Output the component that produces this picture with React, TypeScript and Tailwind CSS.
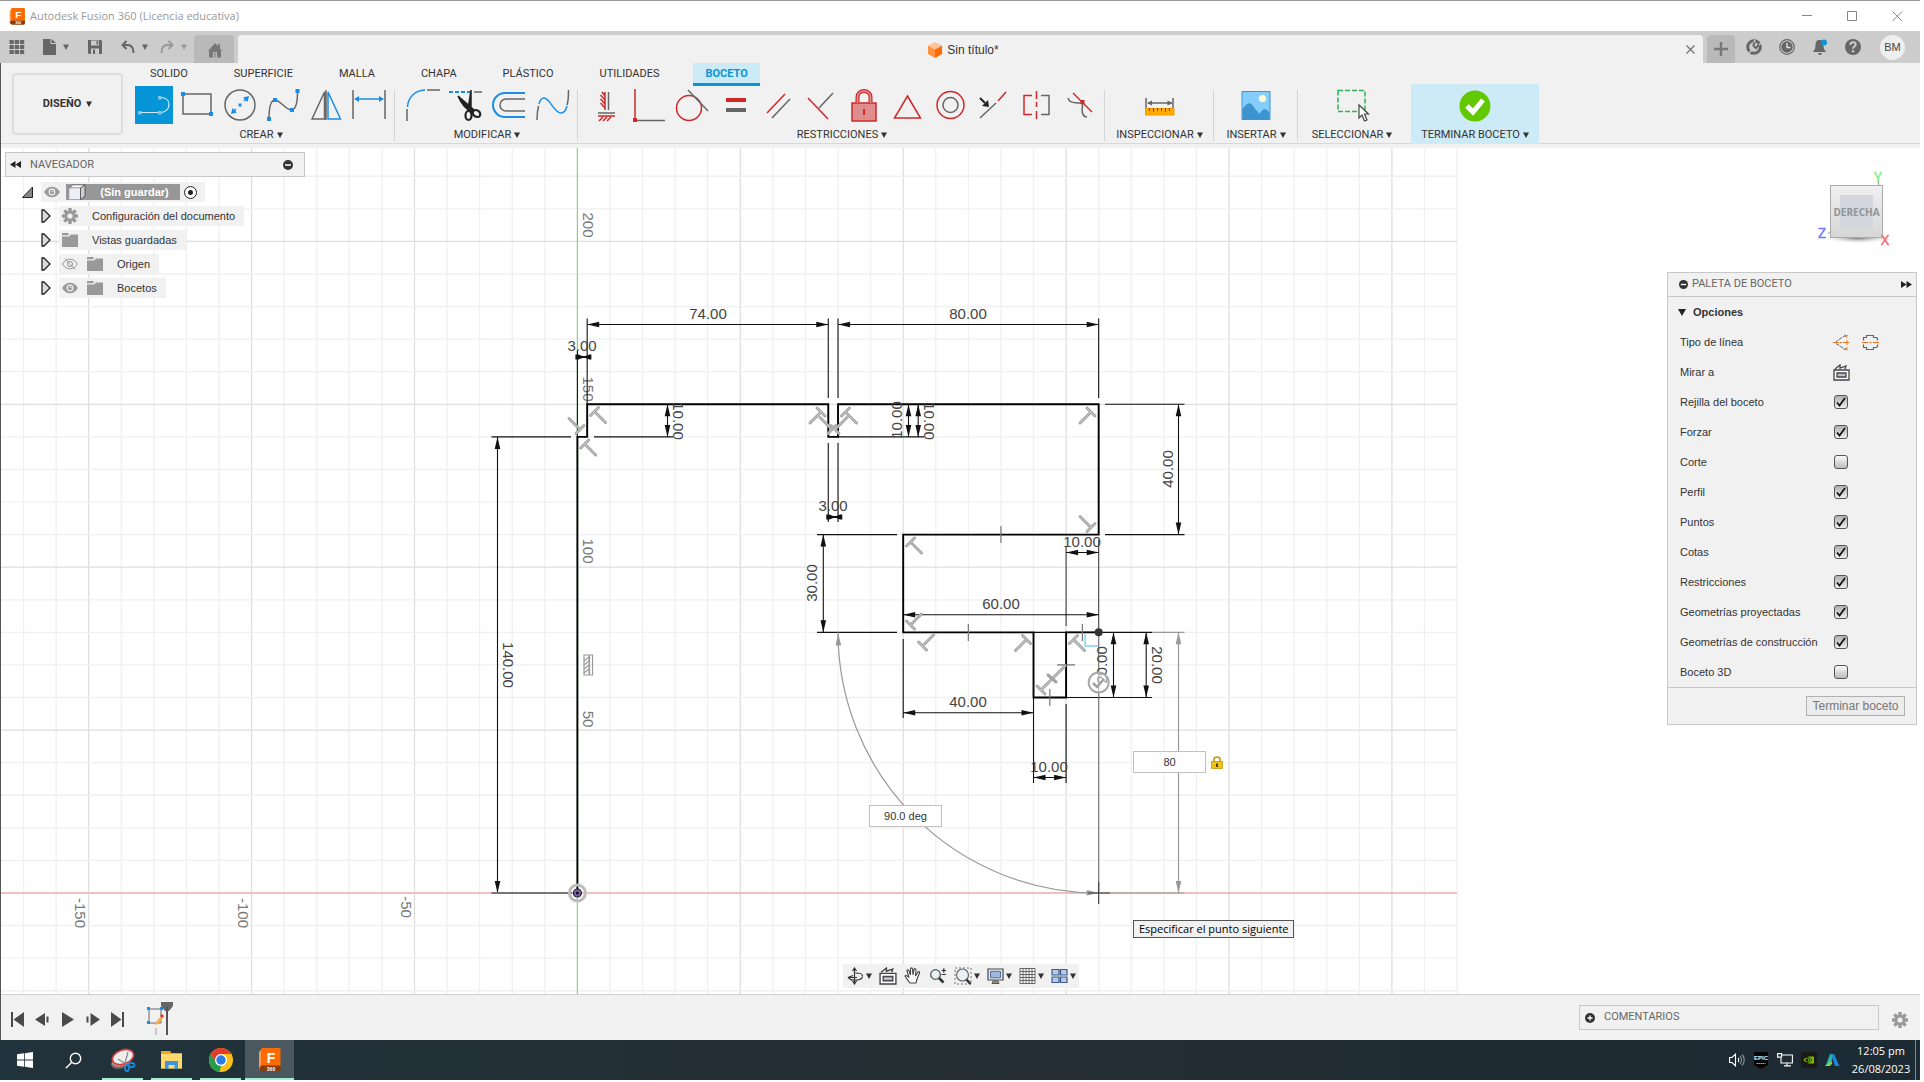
import React from "react";

const G = "#666666";
const B = "#1a8ce8";
const R = "#cf2828";

function Caret({ className = "text-[#333333]" }: { className?: string }) {
  return (
    <svg width="6" height="6" viewBox="0 0 6 6" className={className} fill="currentColor" aria-hidden="true">
      <path d="M0 .5h6L3 6z" />
    </svg>
  );
}

/* ---------- title bar ---------- */

function FusionLogo({ size }: { size: number }) {
  return (
    <svg width={size} height={size} viewBox="0 0 24 24" className="font-['Liberation_Sans',Arial,sans-serif]" aria-hidden="true">
      <path d="M1 4 4 1v18l-3 3z" fill="#ff9a4d" />
      <path d="M3 1.500A1.500 1.500 0 0 1 4.500 0H21a1.500 1.500 0 0 1 1.500 1.500V18H3z" fill="#ff6b00" />
      <path d="M3 17.500h19.500V22a1.500 1.500 0 0 1-1.500 1.500H4L1 21z" fill="#8a3a06" />
      <text x="13" y="14.500" textAnchor="middle" fontSize="14" fontWeight="700" fill="#fff">F</text>
      <text x="13" y="22.500" textAnchor="middle" fontSize="5" fontWeight="700" fill="#fff">360</text>
    </svg>
  );
}

function TitleBar() {
  return (
    <header className="flex h-[31px] shrink-0 items-center border-t border-[#999999] bg-white pl-[9px] font-['Open_Sans',sans-serif] text-[#999999]">
      <FusionLogo size={17} />
      <h1 className="ml-1 text-[11px]">Autodesk Fusion 360 (Licencia educativa)</h1>
      <div className="ml-auto flex pr-[1px]">
        {[
          ["Minimizar", "M1 5.500h10"],
          ["Maximizar", "M1.500 1.500h9v9h-9z"],
          ["Cerrar", "M1.500 1.500l9.500 9.500M11 1.500l-9.500 9.500"],
        ].map(([name, d]) => (
          <button key={name} aria-label={name} className="flex h-[30px] w-[45px] items-center justify-center">
            <svg width="12" height="12" viewBox="0 0 12 12" fill="none" stroke="#888888">
              <path d={d} />
            </svg>
          </button>
        ))}
      </div>
    </header>
  );
}

/* ---------- document tab row ---------- */

function TabRow() {
  const ic = "h-5 w-5";
  return (
    <div className="flex h-8 shrink-0 items-stretch bg-[#cccccc] font-['Liberation_Sans',Arial,sans-serif] text-[#666666]">
      <div className="flex w-[194px] items-center pl-[7px]">
        <button aria-label="Panel de datos">
          <svg className={ic} viewBox="0 0 20 20" fill="currentColor">
            {[0, 1, 2].map((r) => [0, 1, 2].map((c) => <rect key={`${r}${c}`} x={2.500 + c * 5.200} y={3 + r * 5} width="4.300" height="4" rx=".6" />))}
          </svg>
        </button>
        <button aria-label="Archivo" className="ml-[12px] flex items-center">
          <svg className={ic} viewBox="0 0 20 20" fill="currentColor">
            <path d="M4 2h7.500v5H17v11H4z M12.500 2v4H17z" />
          </svg>
          <Caret className="ml-1 text-[#666666]" />
        </button>
        <button aria-label="Guardar" className="ml-[16px]">
          <svg className={ic} viewBox="0 0 20 20">
            <path d="M3 3h13l1 1v13H4l-1-1z" fill="currentColor" />
            <path d="M6 3.500h8v5H6zM6 11.500h8V17H6z" fill="#ccc" />
            <path d="M11.500 4h1.700v3.500h-1.700zM8 12.500h2V17H8z" fill="currentColor" />
          </svg>
        </button>
        <button aria-label="Deshacer" className="ml-[13px] flex items-center gap-1">
          <svg className={ic} viewBox="0 0 20 20" fill="none" stroke="currentColor" strokeWidth="2">
            <path d="M8.500 4 4.500 8l4 4M4.500 8h5c4 0 6 3 6 8" />
          </svg>
          <Caret className="text-[#666666]" />
        </button>
        <button aria-label="Rehacer" className="ml-[9px] flex items-center gap-1 text-[#999999]">
          <svg className={ic} viewBox="0 0 20 20" fill="none" stroke="currentColor" strokeWidth="2">
            <path d="m11.500 4 4 4-4 4M15.500 8h-5c-4 0-6 3-6 8" />
          </svg>
          <Caret className="text-[#999999]" />
        </button>
      </div>
      <button aria-label="Inicio" className="mt-1 flex w-[40px] items-center justify-center rounded-t bg-[#b9b9b9] pt-[2px] pl-[2px]">
        <svg width="16" height="16" viewBox="0 0 16 16" fill="#777777">
          <path d="M8 1 1 9h1v6.500h4V10h4v5.500h4V9h1l-2-2.500V2h-2v2z" />
          <path d="M7 10.500h2v5H7z" fill="#999" />
        </svg>
      </button>
      <div className="mt-1 ml-1 flex flex-1 items-center rounded-t bg-[#f1f1f1] pr-[4px]">
        <div className="flex flex-1 items-center justify-center gap-1 pt-[2px] pl-[6px] text-[12px] text-[#333333]">
          <svg width="16" height="16" viewBox="0 0 16 16" aria-hidden="true">
            <path d="m8 0 7 3.500L8 7.500 1 3.500z" fill="#ffc39a" />
            <path d="M1 3.500 8 7.500V16l-7-4z" fill="#ff9440" />
            <path d="m15 3.500-7 4V16l7-4z" fill="#ff6a00" />
          </svg>
          Sin título*
        </div>
        <button aria-label="Cerrar documento" className="p-1">
          <svg width="9" height="9" viewBox="0 0 9 9" fill="none" stroke="#777" strokeWidth="1.400"><path d="m.5.500 8 8m0-8-8 8" /></svg>
        </button>
      </div>
      <button aria-label="Nuevo diseño" className="mt-1 ml-1 flex w-[28px] items-center justify-center rounded-t bg-[#b9b9b9]">
        <svg width="14" height="14" viewBox="0 0 14 14" stroke="#777" strokeWidth="2.400"><path d="M7 0v14M0 7h14" /></svg>
      </button>
      <div className="flex items-center gap-[13px] pr-[15px] pl-[9px]">
        <button aria-label="Extensiones">
          <svg className={ic} viewBox="0 0 20 20" fill="none">
            <circle cx="10" cy="10" r="6.300" stroke="currentColor" strokeWidth="3" />
            <path d="m5 16 5-5.500M8.500 7l5 5M10.500 6V3M13.500 9.500l4-4" stroke="#ccc" strokeWidth="1.500" />
            <path d="M9 8.500 12 11l3-3.500M11 5.500 9 8.500" stroke="currentColor" strokeWidth="2" />
          </svg>
        </button>
        <button aria-label="Estado del trabajo">
          <svg className={ic} viewBox="0 0 20 20" fill="none">
            <circle cx="10" cy="10" r="7.300" stroke="currentColor" strokeWidth="1.200" />
            <circle cx="10" cy="10" r="5.700" fill="currentColor" />
            <path d="M10 6v4.500h3.500" stroke="#ddd" strokeWidth="1.500" />
          </svg>
        </button>
        <button aria-label="Notificaciones">
          <svg className={ic} viewBox="0 0 20 20">
            <path d="M9.500 3c3 0 4 2 4 5 0 3 .5 5 2.500 6.500v.5H3v-.5C5 13 5.500 11 5.500 8c0-3 1-5 4-5z" fill="currentColor" />
            <path d="M8 16h4a2 2 0 0 1-4 0z" fill="currentColor" />
            <circle cx="14" cy="5.500" r="3" fill="#0696d7" />
          </svg>
        </button>
        <button aria-label="Ayuda">
          <svg className={ic} viewBox="0 0 20 20" fill="none">
            <circle cx="10" cy="10" r="8" fill="currentColor" />
            <path d="M7.300 7.800C7.500 6 8.500 5.200 10 5.200s2.700.9 2.700 2.400c0 2-2.700 2-2.700 4.100" stroke="#ccc" strokeWidth="1.900" />
            <circle cx="10" cy="14.300" r="1.200" fill="#ccc" />
          </svg>
        </button>
        <button className="ml-1 h-[25px] w-[25px] rounded-full bg-[#eeeeee] text-[11px] text-[#444444]">BM</button>
      </div>
    </div>
  );
}

/* ---------- ribbon icons (36 x 36 drawing area) ---------- */

function Ic({ children, fill = "none" }: { children: React.ReactNode; fill?: string }) {
  return (
    <svg width="36" height="36" viewBox="0 0 36 36" fill={fill} strokeWidth="1.500" aria-hidden="true">
      {children}
    </svg>
  );
}

const crear: [string, React.ReactNode][] = [
  ["Línea", <Ic><path d="M4 25.500h20c5 0 9-3 9-8S30 10.500 24 10.500" stroke="#d3ecfa" strokeWidth="1.200" /><g fill="#7cc8ef"><path d="M2 24h3.500v3.500H2zM22 24h3.500v3.500H22zM22 9h3.500v3.500H22z" /></g></Ic>],
  ["Rectángulo", <Ic><path d="M4 7h28v20H4z" stroke={G} /><path d="M2 5h4v4H2zM30 25h4v4h-4z" fill={B} /></Ic>],
  ["Círculo", <Ic><circle cx="18" cy="18" r="15" stroke={G} /><path d="m12 24 2-2M24 12l-2 2" stroke={B} /><path d="m9 27 1.500-6 4.500 4.500zM27 9l-1.500 6-4.500-4.500z M16.500 16.500h3v3h-3z" fill={B} /></Ic>],
  ["Spline", <Ic><path d="M4 32c0-12 2-19 6-19 5 0 12 11 17 10 4-1 5.500-8 5.500-18" stroke={G} /><path d="M2 30h4v4H2zM8 11h4v4H8zM25 21h4v4h-4zM30.500 2h4v4h-4z" fill={B} /></Ic>],
  ["Simetría", <Ic><path d="M16.500 5v27H4zM18 3v30" stroke={G} /><path d="M20 5v27h12.500z" stroke={B} /></Ic>],
  ["Cota de boceto", <Ic><path d="M2 3v29M34 3v29" stroke={G} /><path d="M5 12h26" stroke={B} /><path d="m3 12 5-3v6zM33 12l-5-3v6z" fill={B} /></Ic>],
];

const modificar: [string, React.ReactNode][] = [
  ["Empalme", <Ic><path d="M2 34V22M22 3h13" stroke={G} /><path d="M2.500 20C3 10 10 3.500 20 3" stroke={B} /></Ic>],
  ["Recortar", <Ic><path d="M1 5h4m2 0h4m2 0h4m2 0h3" stroke={B} strokeWidth="2" /><path d="M26 5h8" stroke={G} /><path d="M23 3v18l-3 2zM10 9l16 14-1.500 2.500C17 22 13 16 10 9z" fill="#222" stroke="#222" /><ellipse cx="20.500" cy="28.500" rx="3" ry="4.500" stroke="#222" strokeWidth="2.200" /><ellipse cx="28.500" cy="26.500" rx="4" ry="3.200" stroke="#222" strokeWidth="2.200" transform="rotate(35 28.500 26.500)" /></Ic>],
  ["Desfase", <Ic><path d="M34 6H14a12 12 0 0 0 0 24h20" stroke={B} strokeWidth="2" /><path d="M34 12H15a6 6 0 0 0 0 12h19" stroke={G} /></Ic>],
  ["Cambiar spline", <Ic><path d="M3 33c0-6 .5-10 1.500-14M33 18c1.500-4 1.500-10 1.500-15" stroke={G} /><path d="M5 17c1-4 3-6 5-6 6 0 10 15 17 15 3 0 5-3 6-7" stroke={B} /></Ic>],
];

const restricciones: [string, React.ReactNode][] = [
  ["Horizontal/vertical", <Ic><path d="M17 5v18M14 5l3 4m-4.500-1 4.500 5m-4.500-1 4.500 5m-4.500-1 4.500 5M10 29h17M15 30l-4 4m8-4-4 4m8-4-4 4" stroke={R} /><path d="M20.500 5v18M10 26h17" stroke={G} /></Ic>],
  ["Coincidente", <Ic><path d="M4 2v30" stroke={R} /><path d="M5 33.500h29" stroke={G} /><path d="M2 31h4v4H2z" fill={R} /></Ic>],
  ["Tangente", <Ic><circle cx="15" cy="21" r="12.500" stroke={R} /><path d="m14 3 20 21" stroke={G} /></Ic>],
  ["Igual", <Ic><path d="M9 11h20v4H9z" fill={R} /><path d="M9 21h20v4H9z" fill={G} /></Ic>],
  ["Paralelo", <Ic><path d="M7 26 25 7" stroke={R} /><path d="m12 31 18-19" stroke={G} /></Ic>],
  ["Perpendicular", <Ic><path d="m5 11 20 21" stroke={R} /><path d="M16 21 30 6" stroke={G} /></Ic>],
  ["Fijar", <Ic><path d="M6 16h24v18H6z" fill="#df8c8c" stroke={R} /><path d="M11.500 16v-6c0-8 13-8 13 0v6" stroke={R} strokeWidth="4" /><path d="M11.500 16v-6c0-8 13-8 13 0v6" stroke="#e39a9a" strokeWidth="1.500" /><path d="M18 22v6" stroke={R} strokeWidth="2" /></Ic>],
  ["Punto medio", <Ic><path d="M18.500 9 31.500 31h-26z" stroke={R} /></Ic>],
  ["Concéntrico", <Ic><circle cx="18.500" cy="18" r="13.500" stroke={R} /><circle cx="18.500" cy="18" r="7.500" stroke={G} /></Ic>],
  ["Colineal", <Ic><path d="m23 14 8-9" stroke={R} /><path d="m5 31 16-15" stroke={G} /><path d="m5 11 5 5" stroke="#222" strokeWidth="2" /><path d="m14 20-1-7-6 6z" fill="#222" /></Ic>],
  ["Simetría", <Ic><path d="M14 8.500H6v19h8M18.500 4v8m0 3v5m0 4v8" stroke={R} /><path d="M23 8.500h8v19h-8" stroke={G} /></Ic>],
  ["Curvatura", <Ic><path d="M7 11c2 6 6 4 12 5 3 0 3 3 2 6 0 5 1 8 5 8" stroke={G} /><path d="m12 6 19 19" stroke={R} /><path d="M19.500 13h4v4h-4z" fill={R} /></Ic>],
];

function RibbonGroup({ label, tools, active }: { label: string; tools: [string, React.ReactNode][]; active?: string }) {
  return (
    <section className="relative flex flex-col items-center px-[5px] pl-[6px]">
      <div className="flex">
        {tools.map(([name, icon]) => (
          <button key={name} aria-label={name} className="flex h-[38px] w-[43px] items-center justify-center">
            <span className={name === active ? "flex h-[38px] w-[38px] items-center justify-center bg-[#0696d7]" : "flex"}>{icon}</span>
          </button>
        ))}
      </div>
      <GroupLabel label={label} />
      <span className="absolute top-1 right-0 h-[51px] w-px bg-[#d5d5d5]" />
    </section>
  );
}

function GroupLabel({ label }: { label: string }) {
  return (
    <button className="flex h-5 items-center gap-[3px] pt-[2px] text-[11px] whitespace-nowrap text-[#333333]">
      {label}
      <Caret />
    </button>
  );
}

function Ribbon() {
  const tabs = ["SOLIDO", "SUPERFICIE", "MALLA", "CHAPA", "PLÁSTICO", "UTILIDADES", "BOCETO"];
  return (
    <div className="flex h-[85px] shrink-0 border-b-4 border-[#f1f1f1] bg-[#f1f1f1] font-[Roboto,sans-serif] text-[11px] text-[#333333] shadow-[inset_0_-1px_0_#d8d8d8]">
      <button className="mt-[10px] ml-[11px] flex h-[62px] w-[111px] shrink-0 items-center justify-center gap-[5px] rounded border-2 border-[#dedede] font-bold">
        DISEÑO
        <Caret />
      </button>
      <div className="ml-[3px] flex flex-col">
        <nav className="ml-[12px] flex h-6 gap-[22px]">
          {tabs.map((t) => (
            <button
              key={t}
              className={
                t === "BOCETO"
                  ? "border-b-[3px] border-[#0696d7] bg-[#cdeaf7] px-[12px] pt-[3px] font-bold text-[#0696d7]"
                  : "border-b-[3px] border-transparent px-[12px] pt-[3px]"
              }
            >
              {t}
            </button>
          ))}
        </nav>
        <div className="flex h-[58px]">
          <RibbonGroup label="CREAR" tools={crear} active="Línea" />
          <RibbonGroup label="MODIFICAR" tools={modificar} />
          <RibbonGroup label="RESTRICCIONES" tools={restricciones} />
          <section className="relative flex w-[109px] flex-col items-center">
            <button aria-label="Medir" className="h-[38px]">
              <Ic>
                <path d="M4 11v10M31 11v10" stroke={G} />
                <path d="M6 16h24" stroke={G} />
                <path d="m5 16 5-2.500v5zM30.500 16l-5-2.500v5z" fill={G} />
                <path d="M3.500 21.500h28.500V28H3.500z" fill="#ffab00" stroke="#f09a00" strokeWidth="1" />
                <path d="M7.500 21v3m4-3v4m4-4v3m4-3v3m4-3v4m4-4v3" stroke="#7a5200" strokeWidth="1" />
              </Ic>
            </button>
            <GroupLabel label="INSPECCIONAR" />
            <span className="absolute top-1 right-0 h-[51px] w-px bg-[#d5d5d5]" />
          </section>
          <section className="relative flex w-[84px] flex-col items-center">
            <button aria-label="Insertar imagen" className="h-[38px]">
              <Ic>
                <path d="M4 4.500h28v28H4z" fill="#85cdfb" stroke="#3d95d1" strokeWidth="1" />
                <path d="M4.500 32V22c4-6 8-9 12-1l5 6c3-5 6-7 10-1v6z" fill="#3d93cf" />
                <circle cx="24.500" cy="11.500" r="3.600" fill="#fff9d8" />
              </Ic>
            </button>
            <GroupLabel label="INSERTAR" />
            <span className="absolute top-1 right-0 h-[51px] w-px bg-[#d5d5d5]" />
          </section>
          <section className="flex w-[108px] flex-col items-center">
            <button aria-label="Seleccionar" className="h-[38px]">
              <Ic>
                <path d="M4 3.500h27v21H4z" stroke="#2eb359" strokeDasharray="5 2" strokeWidth="1.500" />
                <path d="M25 18v13l3-3 2.500 6 2.500-1-2.500-6h4z" fill="#fff" stroke="#444" strokeWidth="1.200" />
              </Ic>
            </button>
            <GroupLabel label="SELECCIONAR" />
          </section>
          <section className="-mt-[2px] ml-[5px] flex w-[128px] flex-col items-center bg-[#cdeaf7] pt-[2px]">
            <button aria-label="Terminar boceto" className="h-[38px]">
              <Ic>
                <circle cx="18" cy="19" r="15.500" fill="#62c800" />
                <path d="m10 19 6 6 10-12" stroke="#fff" strokeWidth="5" />
              </Ic>
            </button>
            <GroupLabel label="TERMINAR BOCETO" />
          </section>
        </div>
      </div>
    </div>
  );
}

/* ---------- sketch ---------- */

const OX = 577.400;
const OY = 893;
const S = 3.258;
const X = (mm: number) => OX + mm * S;
const Y = (mm: number) => OY - mm * S;

function Head({ x, y, a, len = 12 }: { x: number; y: number; a: number; len?: number }) {
  return <path d={`M0 0L${len} -2.800V2.800z`} stroke="none" transform={`translate(${x} ${y}) rotate(${a})`} />;
}

function HDim({ y, a, b, len }: { y: number; a: number; b: number; len?: number }) {
  return (
    <g>
      <path d={`M${a} ${y}H${b}`} />
      <Head x={a} y={y} a={0} len={len} />
      <Head x={b} y={y} a={180} len={len} />
    </g>
  );
}

function VDim({ x, a, b }: { x: number; a: number; b: number }) {
  return (
    <g>
      <path d={`M${x} ${a}V${b}`} />
      <Head x={x} y={a} a={90} />
      <Head x={x} y={b} a={-90} />
    </g>
  );
}

function Bowtie({ y, a }: { y: number; a: number }) {
  return <path stroke="none" d={`M${a - 2} ${y - 2.500}h3l4 1.500h3l4-1.500h2v5h-2l-4-1.500h-3l-4 1.500h-3z`} />;
}

function Perp({ x, y, dx, dy, n = 11 }: { x: number; y: number; dx: number; dy: number; n?: number }) {
  const d = `M${x} ${y}l${dx * n} ${dy * n}M${x - dy * 4} ${y + dx * 4}L${x + dy * 4} ${y - dx * 4}`;
  return (
    <g strokeLinecap="round">
      <path d={d} stroke="#a2a2a2" strokeWidth="3" />
      <path d={d} stroke="#cdcdcd" strokeWidth="1" />
    </g>
  );
}

function Label({ x, y, r = 0, children }: { x: number; y: number; r?: number; children: string }) {
  return (
    <text x={x} y={y} transform={`rotate(${r} ${x} ${y})`} textAnchor="middle" dominantBaseline="central">
      {children}
    </text>
  );
}

function Sketch() {
  const D = 32.580;
  const minorX: number[] = [];
  for (let i = -17; i <= 27; i++) minorX.push(i);
  const minorY: number[] = [];
  for (let i = -3; i <= 22; i++) minorY.push(i);
  const profile: [number, number][] = [
    [0, 0], [0, 140], [3, 140], [3, 150], [77, 150], [77, 140], [80, 140], [80, 150], [160, 150],
    [160, 110], [100, 110], [100, 80], [140, 80], [140, 60], [150, 60], [150, 80], [160, 80],
  ];
  const y150 = Y(150), y140 = Y(140), y110 = Y(110), y80 = Y(80), y60 = Y(60);
  return (
    <svg
      className="absolute top-0 left-0 font-['Liberation_Sans',Arial,sans-serif] text-[15px]"
      width="1920"
      height="846"
      viewBox="1 148 1920 846"
      fill="none"
      role="img"
      aria-label="Boceto"
    >
      {minorX.map((i) => (
        <path key={i} d={`M${OX + i * D} 148V994`} stroke={i % 5 === 0 ? "#dedede" : "#f0f0f0"} strokeWidth="1.300" />
      ))}
      {minorY.map((i) => (
        <path key={i} d={`M0 ${OY - i * D}H1457`} stroke={i % 5 === 0 ? "#dedede" : "#f0f0f0"} strokeWidth="1.300" />
      ))}
      <path d={`M0 ${OY}H1457`} stroke="#f3b3b3" strokeWidth="1.600" />
      <path d={`M${OX} 148V994`} stroke="#ffffff" strokeWidth="1.400" />
      <path d={`M${OX} 148V994`} stroke="#74dc74" strokeWidth="1.100" />

      <g fill="#777777">
        <Label x={588} y={225} r={90}>200</Label>
        <Label x={588} y={389} r={90}>150</Label>
        <Label x={588} y={551} r={90}>100</Label>
        <Label x={588} y={719} r={90}>50</Label>
        <Label x={80} y={913} r={90}>-150</Label>
        <Label x={243} y={913} r={90}>-100</Label>
        <Label x={406} y={907} r={90}>-50</Label>
      </g>

      <g stroke="#111111" strokeWidth="1.100" fill="#111111">
        <path d={`M${X(3)} 318.500V404M${X(77)} 318.500V398M${X(80)} 318.500V398M${X(160)} 318.500V398M${OX} 351V437`} />
        <HDim y={324.500} a={X(3)} b={X(77)} />
        <HDim y={324.500} a={X(80)} b={X(160)} />
        <Bowtie y={357} a={OX} />
        <Bowtie y={517} a={X(77)} />
        <path d={`M${X(77)} 443V522M${X(80)} 443V522`} />
        <path d={`M491.500 ${y140}H571M594 ${y140}H673M${X(80)} ${y140}H924`} />
        <VDim x={667.500} a={y150} b={y140} />
        <VDim x={908.500} a={y150} b={y140} />
        <VDim x={918.200} a={y150} b={y140} />
        <VDim x={497.500} a={y140} b={OY} />
        <path d={`M1105 ${y150}H1184.500M1105 ${y110}H1184.500`} />
        <VDim x={1178.500} a={y150} b={y110} />
        <path d={`M817 ${y110}H897M817 ${y80}H897`} />
        <VDim x={823.300} a={y110} b={y80} />
        <path d={`M${X(150)} 546V626M${X(160)} 540V632`} stroke="#444" />
        <HDim y={552.500} a={X(150)} b={X(160)} />
        <HDim y={614.700} a={X(100)} b={X(160)} />
        <path d={`M${X(100)} 639V718M${X(140)} 698V783M${X(150)} 704V783`} />
        <HDim y={712.700} a={X(100)} b={X(140)} />
        <HDim y={777.500} a={X(140)} b={X(150)} />
        <path d={`M${X(140)} ${y80}H1152M${X(150)} ${y60}H1152`} />
        <VDim x={1113.500} a={y80} b={y60} />
        <VDim x={1146.200} a={y80} b={y60} />
      </g>
      <path d={`M491.500 ${OY}H572`} stroke="#777" strokeWidth="2" />

      <g stroke="#999999" fill="#999999" strokeWidth="1.200">
        <path d={`M${X(80)} ${y80}A${80 * S} ${80 * S} 0 0 0 ${X(160)} ${OY}`} fill="none" />
        <Head x={X(80)} y={y80 + 1} a={88} />
        <Head x={X(160)} y={OY} a={181} />
        <VDim x={1178.500} a={y80} b={OY} />
        <path d={`M1152 ${y80}H1184.500M${X(160)} ${OY}H1184.500`} />
        <path d={`M${X(160)} ${y80}V${OY}`} stroke="#777" />
      </g>
      <path d={`M${X(160)} 882V904M1088 ${OY}H1110`} stroke="#444" strokeWidth="1.200" />

      <polyline points={profile.map(([a, b]) => `${X(a)},${Y(b)}`).join(" ")} stroke="#000000" strokeWidth="1.900" />

      <path
        d={`M${X(130)} 526V543M${X(120)} 624V641M${X(155)} 624V641M${X(145)} 689V706M1057 ${Y(70)}h18`}
        stroke="#777"
        strokeWidth="1.200"
      />

      <Perp x={594.500} y={411.500} dx={1} dy={1} />
      <Perp x={580} y={429.500} dx={-1} dy={-1} />
      <Perp x={584.700} y={444} dx={1} dy={1} />
      <Perp x={821} y={412} dx={-1} dy={1} />
      <Perp x={845.500} y={412} dx={1} dy={1} />
      <Perp x={832} y={429.500} dx={-1} dy={-1} n={12} />
      <Perp x={835} y={429.500} dx={1} dy={-1} n={12} />
      <Perp x={1091} y={412} dx={-1} dy={1} />
      <Perp x={1091} y={527.500} dx={-1} dy={-1} />
      <Perp x={910.500} y={542} dx={1} dy={1} />
      <Perp x={910.500} y={625} dx={1} dy={-1} />
      <Perp x={922.500} y={646} dx={1} dy={-1} />
      <Perp x={1026.500} y={639.500} dx={-1} dy={1} />
      <Perp x={1073.500} y={639.500} dx={1} dy={1} />
      <Perp x={1041} y={690} dx={1} dy={-1} n={24} />
      <path d="m1048 675 8 7" stroke="#a2a2a2" strokeWidth="3" strokeLinecap="round" />

      <g stroke="#999" strokeWidth="1.200">
        <path d="M584 655v20h5v-20zM589.500 655v20h3v-20z" />
        <path d="m584 661 5-4m-5 8 5-4m-5 8 5-4m-5 8 5-4" />
      </g>

      <g fill="#444444">
        <Label x={708} y={313}>74.00</Label>
        <Label x={968} y={313}>80.00</Label>
        <Label x={582} y={345}>3.00</Label>
        <Label x={833} y={505}>3.00</Label>
        <Label x={678} y={421} r={90}>10.00</Label>
        <Label x={896} y={420} r={-90}>10.00</Label>
        <Label x={929} y={421} r={90}>10.00</Label>
        <Label x={1167} y={469} r={-90}>40.00</Label>
        <Label x={811} y={583} r={-90}>30.00</Label>
        <Label x={1082} y={541}>10.00</Label>
        <Label x={1001} y={603}>60.00</Label>
        <Label x={968} y={701}>40.00</Label>
        <Label x={1049} y={766}>10.00</Label>
        <Label x={1101} y={665} r={-90}>20.00</Label>
        <Label x={1157} y={665} r={90}>20.00</Label>
        <Label x={508} y={665} r={90}>140.00</Label>
      </g>

      <path d="M1085 633v13h13" stroke="#7fd0f7" strokeWidth="1.500" />
      <circle cx={X(160)} cy={y80} r="4" fill="#333" />
      <circle cx={X(160)} cy="682.500" r="10" stroke="#a8a8a8" strokeWidth="2" fill="#ffffff" fillOpacity=".5" />
      <path d="m1093 683 4 4 7-8" stroke="#a0a0a0" strokeWidth="2.500" />
      <circle cx={OX} cy={OY} r="8" stroke="#bdbdbd" strokeWidth="3" />
      <circle cx={OX} cy={OY} r="4" fill="#7a5fb0" stroke="#222" strokeWidth="1.200" />
      <circle cx={OX} cy={OY} r="1.500" fill="#111" />
    </svg>
  );
}

/* ---------- browser panel ---------- */

function Eye({ off }: { off?: boolean }) {
  return (
    <svg width="16" height="12" viewBox="0 0 16 12" aria-hidden="true">
      {off ? (
        <g fill="none" stroke="#999">
          <path d="M.6 6C4-.4 12-.4 15.400 6 12 12.400 4 12.400.6 6z" />
          <circle cx="8" cy="6" r="2.600" />
          <path d="m3 .5 10 11" />
        </g>
      ) : (
        <>
          <path d="M0 6C4-1 12-1 16 6 12 13 4 13 0 6z" fill="#999" />
          <circle cx="8" cy="6" r="3.400" fill="#f1f1f1" />
          <circle cx="8" cy="6" r="2.200" fill="#999" />
          <circle cx="8.500" cy="5.500" r=".8" fill="#f1f1f1" />
        </>
      )}
    </svg>
  );
}

function Gear({ size }: { size: number }) {
  return (
    <svg width={size} height={size} viewBox="0 0 16 16" aria-hidden="true">
      <g fill="#999">
        {[0, 45, 90, 135].map((a) => <rect key={a} x="6.300" y="0" width="3.400" height="16" rx=".5" transform={`rotate(${a} 8 8)`} />)}
        <circle cx="8" cy="8" r="5.400" />
      </g>
      <circle cx="8" cy="8" r="2.600" fill="#f1f1f1" />
    </svg>
  );
}

function Folder() {
  return (
    <svg width="16" height="14" viewBox="0 0 16 14" fill="#999" aria-hidden="true">
      <path d="M0 3.500h7l2-2h7V14H0zM0 0h6l1 1-1 1.300H0z" />
    </svg>
  );
}

function Expander() {
  return (
    <svg width="10" height="14" viewBox="0 0 10 14" aria-hidden="true">
      <path d="M1 1h2l6 6-6 6H1z" fill="#dcdcdc" stroke="#222" strokeWidth="1.300" />
    </svg>
  );
}

function Navigator() {
  const rows: { label: string; icons: React.ReactNode[] }[] = [
    { label: "Configuración del documento", icons: [<Gear size={16} />] },
    { label: "Vistas guardadas", icons: [<Folder />] },
    { label: "Origen", icons: [<Eye off />, <Folder />] },
    { label: "Bocetos", icons: [<Eye />, <Folder />] },
  ];
  return (
    <aside className="mt-1 ml-1 w-[300px] text-[11px] text-[#333333]">
      <header className="flex h-[25px] items-center border border-[#c8c8c8] bg-[#f1f1f1] pr-[11px] pl-1 font-[Roboto,sans-serif] text-[#666666]">
        <button aria-label="Contraer navegador">
          <svg width="11" height="7" viewBox="0 0 11 7" fill="#222"><path d="M5.500 0v7L0 3.500zM11 0v7L5.500 3.500z" /></svg>
        </button>
        <h2 className="ml-[9px] pt-px">NAVEGADOR</h2>
        <button aria-label="Minimizar navegador" className="ml-auto">
          <svg width="10" height="10" viewBox="0 0 10 10"><circle cx="5" cy="5" r="5" fill="#333" /><path d="M2 5h6" stroke="#fff" strokeWidth="1.500" /></svg>
        </button>
      </header>
      <ul className="mt-[5px] flex flex-col items-start gap-1">
        <li className="flex h-5 items-center pl-[17px]">
          <button aria-label="Contraer raíz" className="mr-2">
            <svg width="11" height="12" viewBox="0 0 11 12"><path d="M10.500 1v10.500H.5z" fill="#888" stroke="#222" /></svg>
          </button>
          <div className="flex h-5 items-center bg-[#f1f1f1] pr-2 pl-[3px]">
            <Eye />
            <div className="mr-1 ml-[6px] flex h-4 w-[114px] items-center bg-[#979797] pl-[2px] font-bold text-white">
              <svg width="18" height="16" viewBox="0 0 18 16" aria-hidden="true">
                <path d="M1 4 5 .8h12L12.500 4z" fill="#fff" stroke="#555" strokeWidth=".8" />
                <path d="M1 4h11.500v11.500H1z" fill="#eceff5" stroke="#999" strokeWidth=".6" />
                <path d="M12.500 4 17 .8v11.500l-4.500 3.200z" fill="#c9cdd6" stroke="#444" strokeWidth=".8" />
              </svg>
              <span className="flex-1 pl-[3px] text-center">(Sin guardar)</span>
            </div>
            <input type="radio" name="componente" aria-label="Activar componente" defaultChecked className="h-[13px] w-[13px] appearance-none rounded-full border border-[#222222] bg-[radial-gradient(circle,#222_2px,#fff_3px)]" />
          </div>
        </li>
        {rows.map((r) => (
          <li key={r.label} className="flex h-5 items-center pl-9">
            <button aria-label={`Expandir ${r.label}`} className="mr-2">
              <Expander />
            </button>
            <div className="flex h-5 items-center gap-[9px] bg-[#f1f1f1] pr-[9px] pl-[3px]">
              {r.icons.map((icon, i) => <span key={i} className="flex w-4 justify-center">{icon}</span>)}
              <span className="ml-[5px]">{r.label}</span>
            </div>
          </li>
        ))}
      </ul>
    </aside>
  );
}

/* ---------- view cube and sketch palette ---------- */

function ViewCube() {
  return (
    <svg width="110" height="84" viewBox="-20 0 110 84" className="mt-[16px] self-end font-['Open_Sans',sans-serif]" role="img" aria-label="Cubo de vistas">
      <defs>
        <linearGradient id="face" x1="0" y1="0" x2="0" y2="1"><stop offset="0" stopColor="#f0f0f0" /><stop offset="1" stopColor="#d6d6d6" /></linearGradient>
        <radialGradient id="shade"><stop offset="0" stopColor="#777" /><stop offset="1" stopColor="#fff" stopOpacity="0" /></radialGradient>
      </defs>
      <ellipse cx="31" cy="74" rx="38" ry="6" fill="url(#shade)" />
      <rect x="3.500" y="21.500" width="52" height="52" fill="url(#face)" stroke="#aaa" />
      <rect x="13" y="31" width="33" height="33" fill="#d3d6dc" />
      <text x="29.500" y="52" textAnchor="middle" fontSize="10" fontWeight="700" fill="#8f9499">DERECHA</text>
      <path d="M51.500 17v4M1 69h2" stroke="#999" />
      <text x="51" y="18" textAnchor="middle" fontSize="14" fill="#7df07d" stroke="#7df07d" strokeWidth=".5">Y</text>
      <text x="58" y="81" textAnchor="middle" fontSize="14" fill="#f57070" stroke="#f57070" strokeWidth=".5">X</text>
      <text x="-5" y="74" textAnchor="middle" fontSize="14" fill="#7777ff" stroke="#7777ff" strokeWidth=".5">Z</text>
    </svg>
  );
}

function SketchPalette() {
  const opts: [string, boolean][] = [
    ["Rejilla del boceto", true], ["Forzar", true], ["Corte", false], ["Perfil", true], ["Puntos", true], ["Cotas", true],
    ["Restricciones", true], ["Geometrías proyectadas", true], ["Geometrías de construcción", true], ["Boceto 3D", false],
  ];
  return (
    <aside className="w-[250px] border border-[#c8c8c8] bg-[#f1f1f1] text-[11px] text-[#333333]">
      <header className="flex h-6 items-center border-b border-[#c8c8c8] pr-1 pl-[11px] font-[Roboto,sans-serif] text-[#666666]">
        <svg width="9" height="9" viewBox="0 0 10 10" aria-hidden="true"><circle cx="5" cy="5" r="5" fill="#333" /><path d="M2 5h6" stroke="#fff" strokeWidth="1.500" /></svg>
        <h2 className="ml-1">PALETA DE BOCETO</h2>
        <button aria-label="Expandir paleta" className="ml-auto">
          <svg width="11" height="7" viewBox="0 0 11 7" fill="#222"><path d="M0 0v7l5.500-3.500zM5.500 0v7L11 3.500z" /></svg>
        </button>
      </header>
      <button className="flex h-[30px] items-center gap-[7px] pl-[10px] font-bold">
        <svg width="8" height="7" viewBox="0 0 8 7" fill="#222"><path d="M0 0h8L4 7z" /></svg>
        Opciones
      </button>
      <div className="flex h-[30px] items-center pl-3">
        <span className="w-[153px]">Tipo de línea</span>
        <button aria-label="Línea de construcción">
          <svg width="17" height="17" viewBox="0 0 17 17" fill="none">
            <path d="M13 1 3 7.500M3 9.500 13 16" stroke="#666" strokeDasharray="4 1" />
            <path d="M0 8.500h6m1 0h2m1 0h6M14 6v5M11 1l3.500 2.500M11 16l3.500-2.500M15 1l-3 2M15 16l-3-2" stroke="#f07020" />
          </svg>
        </button>
        <button aria-label="Línea de centro" className="ml-3">
          <svg width="17" height="17" viewBox="0 0 17 17" fill="none">
            <path d="M1.500 6.500v-3h3V1.500h7v2h3l1 1v2M1.500 10.500v3h3v2h7v-2h3l1-1v-2" stroke="#666" strokeWidth="1.200" />
            <path d="M0 8.500h6m1.500 0h2m1.500 0h6" stroke="#f07020" strokeWidth="1.200" />
          </svg>
        </button>
      </div>
      <div className="flex h-[30px] items-center pl-3">
        <span className="w-[153px]">Mirar a</span>
        <button aria-label="Mirar a"><LookAt size={17} /></button>
      </div>
      {opts.map(([label, on]) => (
        <label key={label} className="flex h-[30px] items-center pl-3">
          <span className="w-[154px]">{label}</span>
          <span className="grid">
            <input
              type="checkbox"
              defaultChecked={on}
              className="peer h-[14px] w-[14px] appearance-none rounded-[3px] border border-[#555555] bg-linear-to-b from-[#fafafa] to-[#bdbdbd] [grid-area:1/1] checked:from-[#b0b0b0] checked:to-[#ededed]"
            />
            <svg width="14" height="14" viewBox="0 0 14 14" fill="none" stroke="#111" strokeWidth="1.700" className="pointer-events-none invisible [grid-area:1/1] peer-checked:visible">
              <path d="m3 7.500 2.500 3L11 3" />
            </svg>
          </span>
        </label>
      ))}
      <footer className="flex h-[37px] items-center justify-end border-t border-[#c8c8c8] pr-[11px]">
        <button className="h-5 w-[99px] border border-[#b0b0b0] bg-[#ececec] text-[12px] leading-4 text-[#777777]">Terminar boceto</button>
      </footer>
    </aside>
  );
}

function LookAt({ size }: { size: number }) {
  return (
    <svg width={size} height={size} viewBox="0 0 17 17" fill="none" stroke="#444" strokeWidth="1.300" aria-hidden="true">
      <path d="M1 6h15v10H1z" fill="#fff" />
      <path d="M4 9h9v4H4z" fill="#b9c0cc" />
      <path d="M2 5 7 1v3l6-2-1 3" />
    </svg>
  );
}

/* ---------- canvas toolbar ---------- */

function ViewToolbar() {
  const items: [string, React.ReactNode, boolean][] = [
    ["Órbita", <svg width="18" height="18" viewBox="0 0 18 18" fill="none" stroke="#333" strokeWidth="1.200"><path d="M8.500 2v14M6.500 4l2-3 2 3M6.500 14l2 3 2-3M16.500 9c0-2-3-3-7-3M3 11c2 3 13 3 13.500-1.500M2 10.500l5-2M2 10.500l4 3M2 10.500h9" /></svg>, true],
    ["Mirar a", <LookAt size={18} />, false],
    ["Encuadre", <svg width="18" height="18" viewBox="0 0 18 18" fill="#fff" stroke="#444" strokeWidth="1.100"><path d="M6 16C4 13 2 11 1 9c1-1 2-.5 4 1.500L3 4c0-1.500 1.500-1.500 2 0l1.500 4L6.500 2c0-1.500 2-1.500 2 0L9 8l1-5.500c.500-1.300 2-1 2 .3L11.500 9 14 5c1-1 2 0 1.500 1L13 12l-1 4z" /></svg>, false],
    ["Zoom", <svg width="18" height="18" viewBox="0 0 18 18" fill="none"><circle cx="6.500" cy="7.500" r="4.800" fill="#e8f2f5" stroke="#555" strokeWidth="1.300" /><path d="m10 11 4.500 4.500" stroke="#333" strokeWidth="2.600" /><path d="M12.500 3.500h4.500M14.800 1.200v4.600M12.500 7.500h4.500" stroke="#333" strokeWidth="1.200" /></svg>, false],
    ["Ajustar", <svg width="18" height="18" viewBox="0 0 18 18" fill="none"><path d="M1 1h16v16H1z" stroke="#777" strokeDasharray="2 2" /><circle cx="8.500" cy="8" r="6" fill="#e8f2f5" stroke="#666" strokeWidth="1.200" /><path d="m12.500 12.500 4 4.500" stroke="#333" strokeWidth="2.600" /></svg>, true],
    ["Visualización", <svg width="17" height="18" viewBox="0 0 17 18"><path d="M1 2h15v11H1z" fill="#eee" stroke="#444" strokeWidth="1.200" /><path d="M3.500 4.300h10v6.500h-10z" fill="#9fb9de" stroke="#4c6a99" /><path d="M6 14h5l1 2.500H5z" fill="#999" stroke="#555" /></svg>, true],
    ["Rejilla", <svg width="17" height="18" viewBox="0 0 17 18" fill="#fff" stroke="#666"><path d="M1 1.500h15v15H1zM4 1.500v15m3-15v15m3-15v15m3-15v15M1 4.500h15m-15 3h15m-15 3h15m-15 3h15" /></svg>, true],
    ["Ventanas gráficas", <svg width="17" height="18" viewBox="0 0 17 18" fill="#b7cbe8" stroke="#3d5a8a" strokeWidth="1.200"><path d="M1 2.500h7V8H1zM9.500 2.500H16V8H9.500zM1 10h7v5.500H1zM9.500 10H16v5.500H9.500z" /></svg>, true],
  ];
  return (
    <div className="absolute bottom-[6px] left-[842px] flex h-6 items-center gap-[7px] bg-[#f1f1f1] px-[3px]">
      {items.map(([name, icon, menu]) => (
        <button key={name} aria-label={name} className="flex items-center gap-[2px]">
          {icon}
          {menu && <Caret />}
        </button>
      ))}
    </div>
  );
}

/* ---------- timeline ---------- */

function Timeline() {
  const play = ["M3 2h2v15H3zM16 2v15L5.500 9.500z", "M12 3v13L2 9.500zM13.500 6.500h2v6h-2z", "M4 2v15l12-7.500z", "M7.500 3v13L17 9.500zM3.500 6.500h2v6h-2z", "M14 2h2v15h-2zM3 2v15l10.500-7.500z"];
  const names = ["Inicio", "Paso atrás", "Reproducir", "Paso adelante", "Fin"];
  return (
    <div className="flex h-[46px] shrink-0 items-center border-t border-[#cfcfcf] bg-[#f1f1f1] pl-[7px]">
      <div className="flex gap-[6px] pt-1">
        {play.map((d, i) => (
          <button key={names[i]} aria-label={names[i]}>
            <svg width="19" height="19" viewBox="0 0 19 19" fill="#4a4a4a"><path d={d} /></svg>
          </button>
        ))}
      </div>
      <button aria-label="Boceto1" className="mt-[3px] ml-[18px]">
        <svg width="28" height="36" viewBox="0 0 28 36" fill="none">
          <path d="M4 8h12v14H4z" stroke="#666" />
          <path d="M2 6h3v3H2zM15 6h3v3h-3zM2 20h3v3H2z" fill={B} />
          <path d="m10 24 1-3 5-6 2 2-5 6z" fill="#f5b04a" /><path d="m15 15 2-2 2 2-1.500 2z" fill="#e33" />
          <path d="M11 27v7" stroke="#c8c8c8" strokeWidth="2" />
          <path d="M16 1h12v4l-4 5h-4l-4-5z" fill="#666" /><path d="M22 6v28" stroke="#555" strokeWidth="2" />
        </svg>
      </button>
      <div className="mr-[13px] ml-auto flex h-[25px] w-[300px] items-center border border-[#c8c8c8] px-[5px] font-[Roboto,sans-serif] text-[11px] text-[#666666]">
        <button aria-label="Añadir comentario">
          <svg width="10" height="10" viewBox="0 0 10 10"><circle cx="5" cy="5" r="5" fill="#333" /><path d="M2.500 5h5M5 2.500v5" stroke="#fff" strokeWidth="1.300" /></svg>
        </button>
        <span className="ml-[9px]">COMENTARIOS</span>
      </div>
      <button aria-label="Preferencias de la línea de tiempo" className="mt-1 mr-3"><Gear size={16} /></button>
    </div>
  );
}

/* ---------- taskbar ---------- */

function Taskbar() {
  const apps: [string, React.ReactNode, string][] = [
    ["Inicio", <svg width="16" height="16" viewBox="0 0 16 16" fill="#fff"><path d="M0 2.300 7 1.300V7.600H0zM7.800 1.200 16 0v7.600H7.800zM0 8.400h7v6.300l-7-1zM7.800 8.400H16V16l-8.200-1.200z" /></svg>, ""],
    ["Buscar", <svg width="17" height="17" viewBox="0 0 17 17" fill="none" stroke="#fff" strokeWidth="1.400"><circle cx="10.500" cy="6.500" r="5.200" /><path d="m6.800 10.200-6 6" /></svg>, ""],
    ["Recortes", <svg width="26" height="24" viewBox="0 0 26 24"><ellipse cx="11" cy="14" rx="10" ry="6" fill="#999" transform="rotate(-20 11 14)" /><path d="M2 17c3 4 10 3 15 0" fill="none" stroke="#c33" strokeWidth="1.200" /><ellipse cx="13" cy="9" rx="11" ry="7" fill="#eee" stroke="#d43b3b" strokeWidth="1.600" transform="rotate(-20 13 9)" /><path d="m8 11 8 5M18 4l-3 11" stroke="#888" strokeWidth="1.200" /><g fill="none" stroke="#1e88d8" strokeWidth="1.800"><ellipse cx="17" cy="20" rx="2" ry="3" /><ellipse cx="21.500" cy="17" rx="3" ry="2" /></g></svg>, "u"],
    ["Explorador de archivos", <svg width="23" height="20" viewBox="0 0 23 20"><path d="M1 1h9l1.500 2H22v15.500H1z" fill="#e8a91c" /><path d="M1 4h21v14.500H1z" fill="#ffd970" /><path d="M5 19v-8h13v8h-3.500v-4h-6v4z" fill="#3c97dc" /></svg>, "u"],
    ["Google Chrome", <svg width="24" height="24" viewBox="0 0 24 24"><circle cx="12" cy="12" r="12" fill="#fbc116" /><path d="M12 0a12 12 0 0 1 10.400 6H12L6.800 15 1.600 6A12 12 0 0 1 12 0z" fill="#e33b2e" /><path d="M1.600 6 6.800 15 12 18l-1.500 5.900A12 12 0 0 1 1.600 6z" fill="#229e4c" /><circle cx="12" cy="12" r="6" fill="#fff" /><circle cx="12" cy="12" r="4.700" fill="#2b7de9" /></svg>, "u"],
    ["Autodesk Fusion 360", <FusionLogo size={24} />, "a"],
  ];
  return (
    <footer className="flex h-10 shrink-0 items-stretch bg-linear-to-r from-[#20323b] via-[#242e33] to-[#1c2a33] text-white">
      {apps.map(([name, icon, st]) => (
        <button
          key={name}
          aria-label={name}
          className={st === "a" ? "relative flex w-[49px] items-center justify-center bg-[#4c585f]" : "relative flex w-[49px] items-center justify-center"}
        >
          {icon}
          {st !== "" && <span className={st === "a" ? "absolute inset-x-0 bottom-0 h-[2px] bg-[#9ff2cf]" : "absolute inset-x-1 bottom-0 h-[2px] bg-[#9ff2cf]"} />}
        </button>
      ))}
      <div className="ml-auto flex items-center gap-2">
        <svg width="16" height="14" viewBox="0 0 16 14" fill="none" stroke="#fff" strokeWidth="1.100" aria-label="Volumen"><path d="M.6 4.500H3L6.500 1.200v11.600L3 9.500H.6zM9 5c1 1 1 3 0 4" /><path d="M11 3c2 2 2 6 0 8M13 1.500c3 3 3 8 0 11" stroke="#8b969c" /></svg>
        <svg width="16" height="17" viewBox="0 0 16 17" className="font-['Liberation_Sans',Arial,sans-serif]" aria-label="Epic Games"><path d="M1 0h14v13l-7 4-7-4z" fill="#050505" /><text x="8" y="8" textAnchor="middle" fontSize="6" fontWeight="700" fill="#eee">EPIC</text><path d="M3.500 11.500h9" stroke="#aaa" strokeDasharray="1.500 .5" /></svg>
        <svg width="16" height="14" viewBox="0 0 16 14" fill="none" stroke="#fff" strokeWidth="1.100" aria-label="Red"><path d="M5 2h10.400v8H4V5M7 12.900h7M10 10v3M.6.600h4v3.500h-4z" /></svg>
        <svg width="16" height="16" viewBox="0 0 16 16" aria-label="NVIDIA"><path d="M0 0h16v16H0z" fill="#1a1a1a" /><path d="M7 4.500h6v7H7z" fill="#76b900" /><path d="M2 8c2-3 6-4 9 0-3 3.500-7 3-9 0zm2.500 0c1 1.500 3 2 4.500 0-1.500-1.800-3.500-1.500-4.500 0z" fill="#76b900" stroke="#1a1a1a" strokeWidth=".7" /></svg>
        <svg width="15" height="14" viewBox="0 0 15 14" aria-label="Autodesk"><path d="M5 1h4L5 13H.500z" fill="#27b5a0" /><path d="M6 1h3l5.500 12H10z" fill="#1d86dc" /><path d="M0 13 6 8l1.500 2-2.500 3z" fill="#8fd04a" /></svg>
        <div className="ml-[3px] w-[60px] text-center font-['Open_Sans',sans-serif] text-[11px] leading-[18px]">
          <div>12:05 pm</div>
          <div>26/08/2023</div>
        </div>
        <span className="mr-1 -ml-1 h-10 w-px bg-[#7e888e]" />
      </div>
    </footer>
  );
}

export default function App() {
  return (
    <div className="flex h-screen w-full flex-col bg-white pr-1 pb-[2px] font-['Liberation_Sans',Arial,sans-serif]">
      <TitleBar />
      <TabRow />
      <div className="flex min-h-0 flex-1 flex-col border-l border-[#555555]">
        <Ribbon />
        <main className="relative flex min-h-0 flex-1 items-start justify-between overflow-hidden bg-white">
          <Sketch />
          <div className="relative"><Navigator /></div>
          <div className="relative mr-[3px] flex flex-col gap-6">
            <ViewCube />
            <SketchPalette />
          </div>
          <input
            aria-label="Ángulo"
            defaultValue="90.0 deg"
            className="absolute top-[657px] left-[868px] h-[22px] w-[73px] border border-[#c0c0c0] bg-white text-center text-[11px] text-[#333333]"
          />
          <div className="absolute top-[603px] left-[1132px] flex items-center gap-[5px]">
            <input
              aria-label="Longitud"
              defaultValue="80"
              className="h-[22px] w-[73px] border border-[#c0c0c0] bg-white text-center text-[11px] text-[#333333]"
            />
            <svg width="12" height="13" viewBox="0 0 12 13" aria-hidden="true">
              <path d="M3 6V3.500C3 .2 9 .2 9 3.500V6" fill="none" stroke="#c79a10" strokeWidth="1.600" />
              <path d="M.5 5.500h11v7H.5z" fill="#f5c211" stroke="#b98c00" strokeWidth=".7" />
              <path d="M5.200 7.500h1.600v3.500H5.200z" fill="#222" />
            </svg>
          </div>
          <div role="tooltip" className="absolute top-[772px] left-[1132px] border border-[#555555] bg-[#f1f1f1] px-[5px] font-['Open_Sans',sans-serif] text-[11px] leading-4 whitespace-nowrap text-black">
            Especificar el punto siguiente
          </div>
          <ViewToolbar />
        </main>
        <Timeline />
      </div>
      <Taskbar />
    </div>
  );
}
